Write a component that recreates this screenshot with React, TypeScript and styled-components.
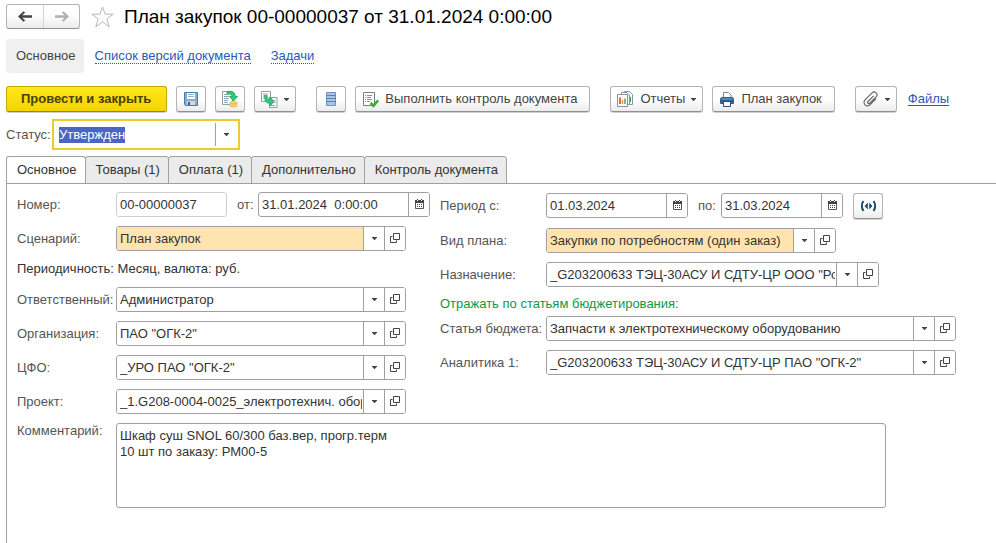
import React, { useEffect, useRef } from 'react';
import styled, { createGlobalStyle, css } from 'styled-components';

const GlobalStyle = createGlobalStyle`
  *, *::before, *::after { box-sizing: border-box; }
  html, body, #root { height: 100%; }
  body {
    margin: 0;
    background: #fff;
    color: #333;
    font: 13px/16px "Liberation Sans", Arial, sans-serif;
  }
  button, input, select, textarea { font: inherit; color: inherit; margin: 0; }
`;

const line = '#a0a0a0';

const Page = styled.main`
  display: flex;
  flex-direction: column;
  min-height: 100%;
  padding: 4px 0 0 6px;
`;

const TitleBar = styled.header`
  display: flex;
  align-items: center;
  height: 25px;
`;

const History = styled.div`
  display: flex;
  height: 25px;
  border: 1px solid #b4b4b4;
  border-bottom-color: #909090;
  border-radius: 3px;
  background: linear-gradient(#fff 40%, #ececec);
`;

const HistoryButton = styled.button`
  display: flex;
  align-items: center;
  justify-content: center;
  width: 36px;
  padding: 0;
  border: 0;
  background: none;
  color: #444;
  & + & { border-left: 1px solid #d4d4d4; }
  &:disabled { color: #b0b0b0; }
`;

const StarButton = styled.button`
  display: flex;
  margin: 0 10px 0 11px;
  padding: 0;
  border: 0;
  background: none;
`;

const Title = styled.h1`
  margin: 0;
  color: #000;
  font-size: 19px;
  line-height: 24px;
  font-weight: 400;
  white-space: nowrap;
`;

const SubNav = styled.nav`
  display: flex;
  align-items: center;
  gap: 20px;
  margin-top: 10px;
  height: 34px;
`;

const SubNavCurrent = styled.span`
  padding: 9px 8px 9px 10px;
  margin-right: -9px;
  border-radius: 3px;
  background: #f0f0f0;
  color: #444;
`;

const SubNavLink = styled.a`
  color: #2a5ab8;
  text-decoration: none;
  line-height: 14px;
  border-bottom: 1px dotted #2a5ab8;
`;

const Toolbar = styled.div`
  display: flex;
  align-items: center;
  flex-wrap: wrap;
  gap: 20px;
  margin-top: 13px;
`;

const ToolGroup = styled.div`
  display: flex;
  gap: 9px;
  align-items: center;
`;

const ToolButton = styled.button<{ $primary?: boolean; $wide?: boolean }>`
  display: flex;
  align-items: center;
  gap: 6px;
  height: 26px;
  padding: 0 6px;
  border: 1px solid #b4b4b4;
  border-bottom-color: #909090;
  border-radius: 3px;
  background: linear-gradient(#fff 50%, #ececec);
  box-shadow: 0 1px 0 #d0d0d0;
  color: #444;
  white-space: nowrap;
  ${p => p.$wide && css`padding-right: 12px;`}
  ${p => p.$primary && css`
    padding: 0 15px 0 14px;
    border-color: #c9a800;
    border-bottom-color: #a08600;
    background: linear-gradient(#ffe81c, #f5d400);
    color: #4a3f00;
    font-weight: 700;
  `}
`;

const FilesLink = styled.a`
  margin-left: 2px;
  color: #2a5ab8;
  text-underline-offset: 2px;
`;

const StatusRow = styled.div`
  display: flex;
  align-items: center;
  margin-top: 7px;
`;

const StatusLabel = styled.label`
  width: 46px;
  color: #555;
`;

const StatusBox = styled.div`
  display: flex;
  width: 188px;
  height: 31px;
  padding: 2px;
  border: 2px solid #f0c830;
  background: #fff;
`;

const StatusInput = styled.input`
  flex: 1;
  min-width: 0;
  padding: 0 3px;
  border: 0;
  outline: 0;
  background: none;
  &::selection { background: #4a66c0; color: #fff; }
`;

const StatusArrow = styled.button`
  display: flex;
  align-items: center;
  justify-content: center;
  width: 21px;
  padding: 0;
  border: 0;
  border-left: 1px solid ${line};
  background: none;
`;

const Tabs = styled.div`
  display: flex;
  margin-top: 6px;
`;

const Tab = styled.button`
  height: 28px;
  margin: 0 0 -1px -1px;
  padding: 0 8px 0 10px;
  border: 1px solid ${line};
  border-radius: 3px 3px 0 0;
  background: #ebebeb;
  white-space: nowrap;
  &:first-child { margin-left: 0; }
  &[aria-selected='true'] { background: #fff; border-bottom-color: #fff; }
`;

const Panel = styled.section`
  flex: 1;
  padding: 8px 0 0 10px;
  border: 1px solid ${line};
  border-width: 1px 0 0 1px;
`;

const Columns = styled.div`
  display: grid;
  grid-template-columns: 423fr 556fr;
`;

const Column = styled.div`
  display: flex;
  flex-direction: column;
  gap: 9px;
  min-width: 0;
`;

const Row = styled.div<{ $label: number; $tall?: boolean }>`
  display: grid;
  grid-template-columns: ${p => p.$label}px minmax(0, 1fr);
  align-items: center;
  min-height: ${p => (p.$tall ? 27 : 25)}px;
`;

const Label = styled.label`
  color: #555;
  white-space: nowrap;
`;

const Inline = styled.div`
  display: flex;
  align-items: center;
`;

const Between = styled.label<{ $width: number }>`
  width: ${p => p.$width}px;
  padding-left: 10px;
  color: #555;
`;

const Note = styled.p`
  margin: 0;
  line-height: 18px;
`;

const BudgetHeading = styled.h2`
  margin: 0 0 -5px;
  color: #109848;
  font-size: 13px;
  line-height: 16px;
  font-weight: 400;
`;

const Box = styled.div<{ $max: number }>`
  display: flex;
  flex: 1;
  width: 100%;
  max-width: ${p => p.$max}px;
  height: 25px;
  border: 1px solid ${line};
  border-radius: 3px;
  background: #fff;
  overflow: hidden;
`;

const TextInput = styled.input`
  flex: 1;
  width: 100%;
  min-width: 0;
  padding: 0 3px;
  border: 0;
  outline: 0;
  background: none;
  white-space: pre;
`;

const NumberInput = styled.input`
  width: 111px;
  height: 25px;
  padding: 0 3px;
  border: 1px solid #d0d0d0;
  border-radius: 3px;
  background: #fff;
`;

const SelectWrap = styled.div<{ $filled?: boolean }>`
  flex: 1;
  display: grid;
  grid-template-columns: minmax(0, 1fr) 21px;
  background: ${p => (p.$filled ? '#ffe4b0' : '#fff')};
`;

const Select = styled.select`
  grid-area: 1 / 1 / 2 / 3;
  appearance: none;
  width: 100%;
  padding: 0 22px 0 3px;
  border: 0;
  outline: 0;
  background: none;
`;

const ArrowCell = styled.span`
  grid-area: 1 / 2 / 2 / 3;
  display: flex;
  align-items: center;
  justify-content: center;
  border-left: 1px solid ${line};
  background: #fff;
  pointer-events: none;
`;

const CellButton = styled.button`
  display: flex;
  align-items: center;
  justify-content: center;
  flex: 0 0 21px;
  padding: 0 0 2px;
  border: 0;
  border-left: 1px solid ${line};
  background: #fff;
`;

const PeriodButton = styled(ToolButton)`
  justify-content: center;
  width: 30px;
  margin-left: 10px;
  padding: 0;
`;

const CommentRow = styled.div`
  display: grid;
  grid-template-columns: 99px minmax(0, 770px);
  align-items: start;
  margin-top: 9px;
`;

const Comment = styled.textarea`
  height: 85px;
  padding: 4px 3px;
  border: 1px solid ${line};
  border-radius: 3px;
  outline: 0;
  resize: none;
`;

/* ---------- icons ---------- */

const Arrow = ({ flip }: { flip?: boolean }) => (
  <svg width="15" height="11" viewBox="0 0 15 11">
    <path
      d={flip ? 'M15 5.5 9.500.300 7.800 1.600 10.700 4.300H1v2.400h9.700L7.800 9.400l1.700 1.300z' : 'M0 5.5 5.500.3l1.700 1.300-2.900 2.700H14v2.400H4.300l2.900 2.700-1.700 1.300z'}
      fill="currentColor"
    />
  </svg>
);

const Star = () => (
  <svg width="23" height="22" viewBox="0 0 23 22">
    <path d="M11.500 1l2.700 7.200h8l-6.400 4.700 2.400 7.800-6.700-4.700-6.700 4.700 2.400-7.800L.8 8.200h8z" fill="#fff" stroke="#b8b8b8" />
  </svg>
);

const Caret = () => (
  <svg width="5" height="3" viewBox="0 0 5 3"><path d="M0 0h5v.6L2.800 3h-.6L0 .6z" fill="#444" /></svg>
);

const Open = () => (
  <svg width="10" height="10" viewBox="0 0 10 10" fill="none" stroke="#444">
    <path d="M3.500.5h6v6h-6zM2.500 3.500h-2v6h6v-2" />
  </svg>
);

const Calendar = () => (
  <svg width="9" height="10" viewBox="0 0 9 10">
    <path d="M.5 2v7.500h8V2" fill="#fff" stroke="#555" />
    <path d="M0 1h9v3H0zM2 0h1v1H2zM6 0h1v1H6z" fill="#444" />
    <path d="M2 5h1v1H2zM4 5h1v1H4zM6 5h1v1H6zM2 7h1v1H2zM4 7h1v1H4zM6 7h1v1H6z" fill="#444" />
    <path d="M2 1h1v1H2zM6 1h1v1H6z" fill="#fff" />
  </svg>
);

const Save = () => (
  <svg width="16" height="16" viewBox="0 0 16 16">
    <path d="M1.500 1.500h13v13h-12l-1-1z" fill="#85aed6" stroke="#4f7aa8" />
    <path d="M4 2h8v6H4z" fill="#fff" />
    <path d="M5 3.500h6M5 5.500h6" stroke="#8fb0cf" />
    <path d="M4 10h8v4H4z" fill="#cdd9e4" />
    <path d="M5 11h2v3H5z" fill="#3f5f80" />
  </svg>
);

const Post = () => (
  <svg width="16" height="18" viewBox="0 0 16 18">
    <path d="M.5 1.500h10v13H.5z" fill="#fff" stroke="#8a9fb0" />
    <path d="M2 4.500h4M2 6.500h5M2 8.500h5M2 10.500h4M2 12.500h4" stroke="#8fa4b4" />
    <path d="M5 1.500c5.500-.8 8.300 1 8.300 5h2.400L11.500 11 7.500 6.500h2.500C10 4.500 8.500 4 5 4z" fill="#2fca78" stroke="#179a50" strokeWidth=".7" />
    <path d="M8 12.500v3c0 1.800 7 1.800 7 0v-3z" fill="#efc13e" stroke="#d6a428" strokeWidth=".6" />
    <ellipse cx="11.500" cy="12.500" rx="3.500" ry="1.200" fill="#ffe383" stroke="#d6a428" strokeWidth=".6" />
    <path d="M8 14.300c1 1.400 6 1.400 7 0" fill="none" stroke="#fff0a8" strokeWidth=".7" />
  </svg>
);

const CreateFrom = () => (
  <svg width="17" height="17" viewBox="0 0 17 17">
    <path d="M.5.500h9v10h-9z" fill="#fff" stroke="#8a9fb0" />
    <path d="M2 3h5M2 5h2M2 7h1" stroke="#8fa4b4" />
    <path d="M8.500 6.500h7.500v10H8.500z" fill="#fff" stroke="#8a9fb0" />
    <path d="M12.500 9.500h2M12.500 11.500h2M10 14.500h4" stroke="#8fa4b4" />
    <path d="M3.500 4.500h2.600c.2 3 .9 4 2.900 4V6l4 4.500-4 4.500v-2.700c-4 0-5.500-2.300-5.500-7.800z" fill="#2fca78" stroke="#179a50" strokeWidth=".7" />
  </svg>
);

const Registry = () => (
  <svg width="16" height="16" viewBox="0 0 16 16">
    <path d="M3.500 1.500h9v13h-9z" fill="#a9c7e5" stroke="#6d92b8" />
    <path d="M3 4.500h10M3 7.500h10M3 10.500h10" stroke="#5b83ab" />
  </svg>
);

const Check = () => (
  <svg width="17" height="17" viewBox="0 0 17 17">
    <path d="M1.500 1.500h11v13h-11z" fill="#fff" stroke="#6a8496" />
    <path d="M3 4.500h1M5 4.500h5M3 6.500h1M5 6.500h4M3 8.500h1M5 8.500h5M3 10.500h1M5 10.500h3" stroke="#7b95a5" />
    <path d="M8.500 12l3 2.800 4.700-5.500" fill="none" stroke="#3fae2a" strokeWidth="2.600" />
  </svg>
);

const Reports = () => (
  <svg width="17" height="16" viewBox="0 0 17 16">
    <path d="M7.500 3V.5h5l3 3v10h-3" fill="#fff" stroke="#8095a8" />
    <path d="M4.500 4V1.500H10l2.500 2.500v9.500H10" fill="#fff" stroke="#8095a8" />
    <path d="M.5 3.500h10v12H.5z" fill="#fff" stroke="#8095a8" />
    <path d="M3 6.500v6.500" stroke="#e03c2a" strokeWidth="1.600" />
    <path d="M5.500 9v4" stroke="#e6962c" strokeWidth="1.400" />
    <path d="M8 7.500V13" stroke="#35a845" strokeWidth="1.400" />
    <path d="M13.500 6v5" stroke="#35a845" />
  </svg>
);

const Printer = () => (
  <svg width="16" height="15" viewBox="0 0 16 15">
    <path d="M4.500 5.500v-5h5L12 3v2.500" fill="#fff" stroke="#7089a2" />
    <path d="M2.500 5h11L15 6.500V11q0 1-1 1H2q-1 0-1-1V6.500z" fill="#2f608f" />
    <path d="M2.500 7h11" stroke="#84abd0" />
    <path d="M4.500 9.500h7v5h-7z" fill="#fff" stroke="#28527b" />
  </svg>
);

const Clip = () => (
  <svg width="17" height="16" viewBox="0 0 14 14" fill="none" stroke="#666" strokeWidth="1">
    <path d="M9.800 4.200l-5 5a1 1 0 0 0 1.500 1.500l5.600-5.600a2.400 2.400 0 0 0-3.500-3.500L2.200 7.800a3 3 0 0 0 4.300 4.300l5.300-5.300" />
  </svg>
);

const Period = () => (
  <svg width="17" height="12" viewBox="0 0 17 12">
    <path d="M3.500 1c-2.200 2.800-2.200 7.200 0 10M13.500 1c2.200 2.800 2.200 7.200 0 10" fill="none" stroke="#164a68" strokeWidth="2" />
    <path d="M7.800 2.500v7L4.600 6zM9.200 2.500v7L12.400 6z" fill="#164a68" />
  </svg>
);

/* ---------- fields ---------- */

type LookupProps = { id: string; label: string; value: string; labelWidth: number; max: number; filled?: boolean };

const Lookup = ({ id, label, value, labelWidth, max, filled }: LookupProps) => (
  <Row $label={labelWidth}>
    <Label htmlFor={id}>{label}</Label>
    <Box $max={max}>
      <SelectWrap $filled={filled}>
        <Select id={id}><option>{value}</option></Select>
        <ArrowCell><Caret /></ArrowCell>
      </SelectWrap>
      <CellButton type="button" aria-label="Открыть"><Open /></CellButton>
    </Box>
  </Row>
);

const DateBox = ({ id, value, max }: { id: string; value: string; max: number }) => (
  <Box $max={max}>
    <TextInput id={id} defaultValue={value} />
    <CellButton type="button" aria-label="Выбрать дату"><Calendar /></CellButton>
  </Box>
);

const tabs = ['Основное', 'Товары (1)', 'Оплата (1)', 'Дополнительно', 'Контроль документа'];

export default function App() {
  const status = useRef<HTMLInputElement>(null);

  useEffect(() => {
    status.current?.focus();
    status.current?.select();
  }, []);

  return (
    <>
      <GlobalStyle />
      <Page>
        <TitleBar>
          <History>
            <HistoryButton type="button" aria-label="Назад"><Arrow /></HistoryButton>
            <HistoryButton type="button" aria-label="Вперед" disabled><Arrow flip /></HistoryButton>
          </History>
          <StarButton type="button" aria-label="В избранное"><Star /></StarButton>
          <Title>План закупок 00-00000037 от 31.01.2024 0:00:00</Title>
        </TitleBar>

        <SubNav>
          <SubNavCurrent>Основное</SubNavCurrent>
          <SubNavLink href="#versions">Список версий документа</SubNavLink>
          <SubNavLink href="#tasks">Задачи</SubNavLink>
        </SubNav>

        <Toolbar>
          <ToolGroup>
            <ToolButton type="button" $primary>Провести и закрыть</ToolButton>
            <ToolButton type="button" aria-label="Записать"><Save /></ToolButton>
            <ToolButton type="button" aria-label="Провести"><Post /></ToolButton>
            <ToolButton type="button" aria-label="Создать на основании"><CreateFrom /><Caret /></ToolButton>
          </ToolGroup>
          <ToolGroup>
            <ToolButton type="button" aria-label="Движения"><Registry /></ToolButton>
            <ToolButton type="button" $wide><Check />Выполнить контроль документа</ToolButton>
          </ToolGroup>
          <ToolGroup>
            <ToolButton type="button"><Reports />Отчеты<Caret /></ToolButton>
            <ToolButton type="button" $wide><Printer />План закупок</ToolButton>
          </ToolGroup>
          <ToolGroup>
            <ToolButton type="button" aria-label="Присоединить"><Clip /><Caret /></ToolButton>
            <FilesLink href="#files">Файлы</FilesLink>
          </ToolGroup>
        </Toolbar>

        <StatusRow>
          <StatusLabel htmlFor="status">Статус:</StatusLabel>
          <StatusBox>
            <StatusInput id="status" role="combobox" aria-expanded="false" ref={status} defaultValue="Утвержден" />
            <StatusArrow type="button" aria-label="Выбрать статус"><Caret /></StatusArrow>
          </StatusBox>
        </StatusRow>

        <Tabs role="tablist">
          {tabs.map((t, i) => (
            <Tab key={t} type="button" role="tab" aria-selected={i === 0}>{t}</Tab>
          ))}
        </Tabs>

        <Panel role="tabpanel">
          <Columns>
            <Column>
              <Row $label={99}>
                <Label htmlFor="number">Номер:</Label>
                <Inline>
                  <NumberInput id="number" readOnly value="00-00000037" />
                  <Between htmlFor="date" $width={31}>от:</Between>
                  <DateBox id="date" value={'31.01.2024\u00a0 0:00:00'} max={172} />
                </Inline>
              </Row>
              <Lookup id="scenario" label="Сценарий:" value="План закупок" labelWidth={99} max={290} filled />
              <Note>Периодичность: Месяц, валюта: руб.</Note>
              <Lookup id="owner" label="Ответственный:" value="Администратор" labelWidth={99} max={290} />
              <Lookup id="org" label="Организация:" value={'ПАО "ОГК-2"'} labelWidth={99} max={290} />
              <Lookup id="cfo" label="ЦФО:" value={'_УРО ПАО "ОГК-2"'} labelWidth={99} max={290} />
              <Lookup id="project" label="Проект:" value="_1.G208-0004-0025_электротехнич. оборудование" labelWidth={99} max={290} />
            </Column>

            <Column>
              <Row $label={106} $tall>
                <Label htmlFor="from">Период с:</Label>
                <Inline>
                  <DateBox id="from" value="01.03.2024" max={142} />
                  <Between htmlFor="to" $width={33}>по:</Between>
                  <DateBox id="to" value="31.03.2024" max={122} />
                  <PeriodButton type="button" aria-label="Выбрать период"><Period /></PeriodButton>
                </Inline>
              </Row>
              <Lookup id="kind" label="Вид плана:" value="Закупки по потребностям (один заказ)" labelWidth={106} max={290} filled />
              <Lookup id="purpose" label="Назначение:" value={'_G203200633 ТЭЦ-30АСУ И СДТУ-ЦР ООО "РосЭнерго"'} labelWidth={106} max={333} />
              <BudgetHeading>Отражать по статьям бюджетирования:</BudgetHeading>
              <Lookup id="item" label="Статья бюджета:" value="Запчасти к электротехническому оборудованию" labelWidth={106} max={410} />
              <Lookup id="analytics" label="Аналитика 1:" value={'_G203200633 ТЭЦ-30АСУ И СДТУ-ЦР ПАО "ОГК-2"'} labelWidth={106} max={410} />
            </Column>
          </Columns>

          <CommentRow>
            <Label htmlFor="comment">Комментарий:</Label>
            <Comment id="comment" defaultValue={'Шкаф суш SNOL 60/300 баз.вер, прогр.терм\n10 шт по заказу: РМ00-5'} />
          </CommentRow>
        </Panel>
      </Page>
    </>
  );
}
